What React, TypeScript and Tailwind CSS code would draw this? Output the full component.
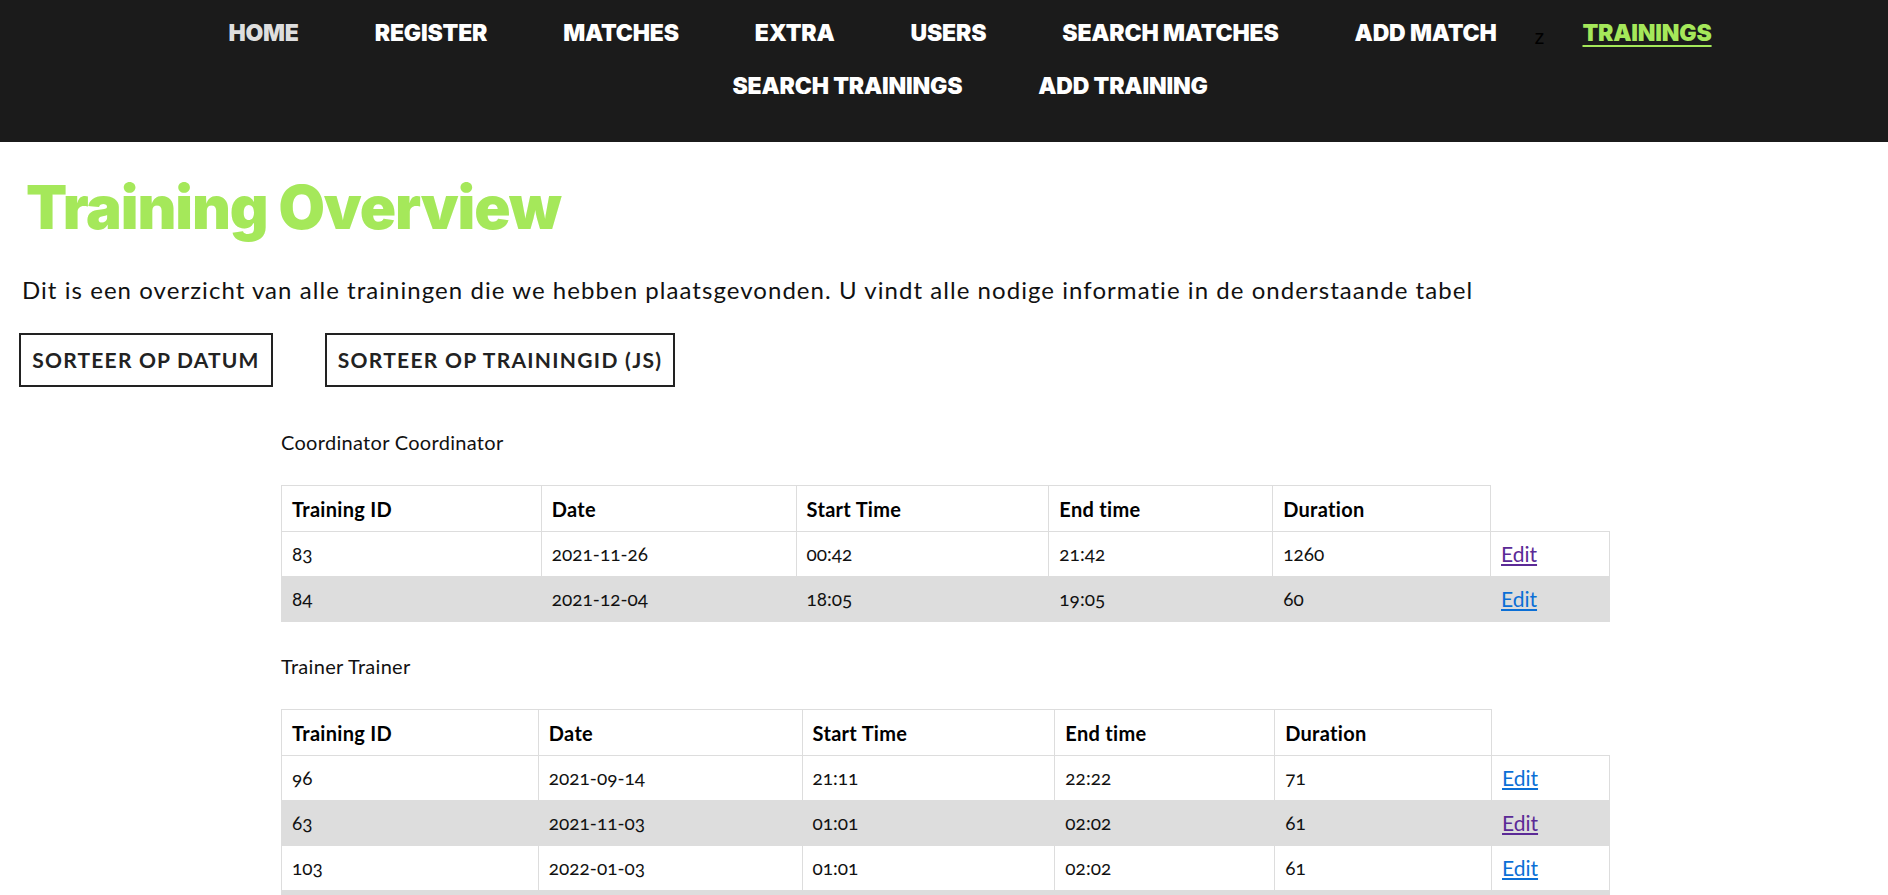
import React from "react";

type Row = {
  id: string;
  date: string;
  start: string;
  end: string;
  duration: string;
  visited?: boolean;
};

const navTop = ["HOME", "REGISTER", "MATCHES", "EXTRA", "USERS", "SEARCH MATCHES", "ADD MATCH"];

const coordinatorRows: Row[] = [
  { id: "83", date: "2021-11-26", start: "00:42", end: "21:42", duration: "1260", visited: true },
  { id: "84", date: "2021-12-04", start: "18:05", end: "19:05", duration: "60" },
];

const trainerRows: Row[] = [
  { id: "96", date: "2021-09-14", start: "21:11", end: "22:22", duration: "71" },
  { id: "63", date: "2021-11-03", start: "01:01", end: "02:02", duration: "61", visited: true },
  { id: "103", date: "2022-01-03", start: "01:01", end: "02:02", duration: "61" },
  { id: "104", date: "2022-01-10", start: "01:01", end: "02:02", duration: "61" },
];

const NavItem = ({ label, active, muted }: { label: string; active?: boolean; muted?: boolean }) => (
  <li className="h-[53px] flex items-center px-[38px]">
    <a
      href="#"
      className={`font-['Inter',sans-serif] text-[23px] font-black tracking-[-0.2px] ${
        active ? "text-[#a5e85a] underline underline-offset-[4px] decoration-2" : muted ? "text-[#dedede]" : "text-white"
      }`}
    >
      {label}
    </a>
  </li>
);

const TrainingTable = ({ rows, cols }: { rows: Row[]; cols: number[] }) => (
  <table className="border-collapse w-[1329px] text-[19px] text-[#111] oldstyle-nums">
    <colgroup>
      {cols.map((w, i) => (
        <col key={i} style={{ width: w }} />
      ))}
    </colgroup>
    <thead>
      <tr className="h-[46px]">
        {["Training ID", "Date", "Start Time", "End time", "Duration"].map((h) => (
          <th key={h} className="border border-[#dddddd] text-left font-bold px-[10px] text-black text-[20px] tracking-[0.3px]">
            {h}
          </th>
        ))}
        <th className="border-0"></th>
      </tr>
    </thead>
    <tbody>
      {rows.map((r, i) => (
        <tr key={r.id} className={`h-[45px] ${i % 2 === 1 ? "bg-[#dddddd]" : "bg-white"}`}>
          <td className="border border-[#dddddd] px-[10px]">{r.id}</td>
          <td className="border border-[#dddddd] px-[10px]">{r.date}</td>
          <td className="border border-[#dddddd] px-[10px]">{r.start}</td>
          <td className="border border-[#dddddd] px-[10px]">{r.end}</td>
          <td className="border border-[#dddddd] px-[10px]">{r.duration}</td>
          <td className="border border-[#dddddd] px-[10px]">
            <a href="#" className={`underline text-[21px] ${r.visited ? "text-[#5b2a96]" : "text-[#0b6fd6]"}`}>
              Edit
            </a>
          </td>
        </tr>
      ))}
    </tbody>
  </table>
);

export default function App() {
  return (
    <div className="min-h-screen bg-white font-['Lato',sans-serif] text-[#111]">
      <nav className="bg-[#1b1b1b] h-[142px] pt-[7px]">
        <ul className="flex flex-wrap justify-center pl-[52px]">
          {navTop.map((l, i) => (
            <NavItem key={l} label={l} muted={i === 0} />
          ))}
          <li className="h-[53px] flex items-center text-[20px] text-black font-['Liberation_Sans',sans-serif] pt-[6px]">z</li>
          <NavItem label="TRAININGS" active />
          <li className="basis-full h-0"></li>
          <NavItem label="SEARCH TRAININGS" />
          <NavItem label="ADD TRAINING" />
        </ul>
      </nav>

      <main className="pb-10">
        <h1 className="font-['Inter',sans-serif] text-[#a5e85a] text-[60px] font-black leading-none pl-[26px] pt-[35px] tracking-[-1.1px]">
          Training Overview
        </h1>
        <p className="text-[24px] pl-[22px] mt-[35px] tracking-[1.05px]">
          Dit is een overzicht van alle trainingen die we hebben plaatsgevonden. U vindt alle nodige informatie in de onderstaande tabel
        </p>
        <div className="flex gap-[52px] pl-[19px] mt-[25px]">
          <button className="h-[54px] w-[254px] border-2 border-[#222] text-[21px] font-bold text-[#222] tracking-[1.2px]">
            SORTEER OP DATUM
          </button>
          <button className="h-[54px] w-[350px] border-2 border-[#222] text-[21px] font-bold text-[#222] tracking-[1.3px]">
            SORTEER OP TRAININGID (JS)
          </button>
        </div>

        <div className="ml-[281px] mt-[42px]">
          <p className="text-[20px] leading-[26px] tracking-[0.3px]">Coordinator Coordinator</p>
          <div className="mt-[30px]">
            <TrainingTable rows={coordinatorRows} cols={[260, 255, 253, 224, 218, 119]} />
          </div>
          <p className="text-[20px] leading-[26px] mt-[31px] tracking-[0.3px]">Trainer Trainer</p>
          <div className="mt-[30px]">
            <TrainingTable rows={trainerRows} cols={[257, 264, 253, 220, 217, 118]} />
          </div>
        </div>
      </main>
    </div>
  );
}
